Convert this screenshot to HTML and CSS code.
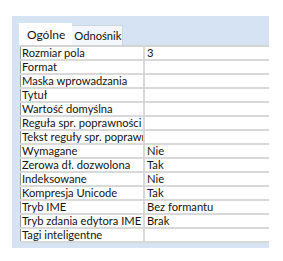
FILE: index.html
```html
<!DOCTYPE html>
<html lang="pl">
<head>
  <meta charset="UTF-8" />
  <title>Właściwości pola</title>
  <link rel="stylesheet" href="styles.css">
</head>
<body>
  <div class="panel">
    <div class="tabs">
      <div class="tab active">Ogólne</div>
      <div class="tab">Odnośnik</div>
    </div>
    <table class="props">
      <tr><td>Rozmiar pola</td><td>3</td></tr>
      <tr><td>Format</td><td></td></tr>
      <tr><td>Maska wprowadzania</td><td></td></tr>
      <tr><td>Tytuł</td><td></td></tr>
      <tr><td>Wartość domyślna</td><td></td></tr>
      <tr><td>Reguła spr. poprawności</td><td></td></tr>
      <tr><td>Tekst reguły spr. poprawn</td><td></td></tr>
      <tr><td>Wymagane</td><td>Nie</td></tr>
      <tr><td>Zerowa dł. dozwolona</td><td>Tak</td></tr>
      <tr><td>Indeksowane</td><td>Nie</td></tr>
      <tr><td>Kompresja Unicode</td><td>Tak</td></tr>
      <tr><td>Tryb IME</td><td>Bez formantu</td></tr>
      <tr><td>Tryb zdania edytora IME</td><td>Brak</td></tr>
      <tr><td>Tagi inteligentne</td><td></td></tr>
    </table>
  </div>
</body>
</html>
```

FILE: styles.css
```css
body {
  margin: 0;
  background: #fff;
  font-family: Lato, "Liberation Sans", sans-serif;
  font-size: 11.2px;
  color: #141414;
}
.panel {
  margin: 16px 0 0 12px;
  width: 257px;
  height: 232px;
  background: #d5e3f2;
  padding: 7px 0 0 7px;
  box-sizing: border-box;
  overflow: hidden;
}
.tabs {
  display: flex;
  align-items: flex-end;
}
.tab {
  padding: 3px 1px 2px 2px;
  line-height: 14px;
  background: #f3f6fa;
  border: 1px solid #cdd7e2;
  border-bottom: none;
  border-left: none;
}
.tab.active {
  background: #fff;
  border: none;
  padding: 5px 7px 3px 8px;
  font-size: 12px;
}
.props {
  border-collapse: collapse;
  background: #fff;
  margin-left: 1px;
  width: 249px;
  table-layout: fixed;
  border-top: 2px solid #d4d4d4;
  border-left: 1px solid #9c9c9c;
}
.props td {
  height: 12px;
  padding: 0 1px 0 2px;
  line-height: 12px;
  border-bottom: 2px solid #d9d9d9;
  white-space: nowrap;
  overflow: hidden;
}
.props td:first-child {
  width: 120px;
  padding-left: 1px;
  border-right: 2px solid #d9d9d9;
}
```
